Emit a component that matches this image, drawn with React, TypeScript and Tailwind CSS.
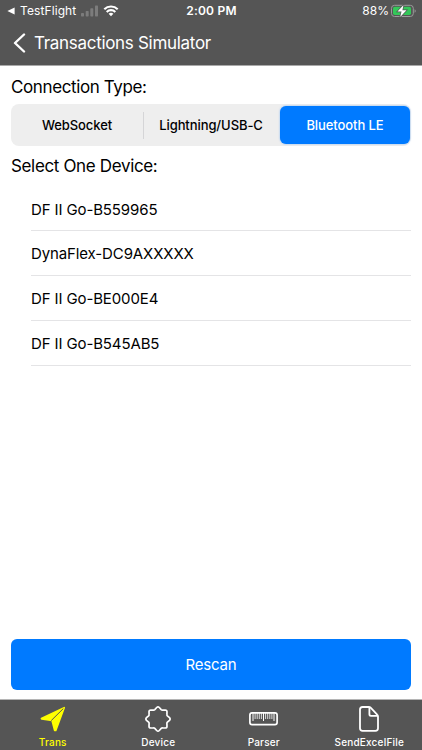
const devices = ["DF II Go-B559965", "DynaFlex-DC9AXXXXX", "DF II Go-BE000E4", "DF II Go-B545AB5"];

function StatusBar() {
    return (
        <div className="grid h-[22px] grid-cols-3 items-center pl-[7px] pr-[6px] text-[12px] leading-[22px]">
            <div className="flex items-center">
                <svg className="mr-[5px]" width="8" height="8" viewBox="0 0 8 8" fill="currentColor">
                    <path d="M0.4 4 7.6 0.6V7.4Z" />
                </svg>
                <span className="whitespace-nowrap tracking-[0.1px]">TestFlight</span>
                <svg className="ml-[5px]" width="17" height="12" viewBox="0 0 17 12" fill="#7c7c7c">
                    <rect x="0" y="8" width="3" height="3.5" rx="0.7" />
                    <rect x="4.7" y="6" width="3" height="5.5" rx="0.7" />
                    <rect x="9.3" y="3.3" width="3" height="8.2" rx="0.7" />
                    <rect x="14" y="0.5" width="3" height="11" rx="0.7" />
                </svg>
                <svg className="ml-[5px]" width="16" height="12" viewBox="0 0 15 12" fill="none" stroke="currentColor" strokeWidth="2.1">
                    <path d="M0.8 4.3a9.5 9.5 0 0 1 13.4 0" />
                    <path d="M3.2 6.9a6.1 6.1 0 0 1 8.6 0" />
                    <path d="M7.5 11.3 5.1 8.8a3.5 3.5 0 0 1 4.8 0Z" fill="currentColor" stroke="none" />
                </svg>
            </div>
            <span className="text-center font-semibold tracking-[0.2px]">2:00 PM</span>
            <div className="flex items-center justify-end">
                <span>88%</span>
                <svg className="ml-[2px]" width="25" height="14" viewBox="0 0 25 14">
                    <rect x="0.5" y="1.3" width="21.8" height="11.2" rx="3" fill="none" stroke="#9b9b9b" />
                    <path d="M23.6 5.2v3.5q1.1-.5 1.1-1.75t-1.1-1.75Z" fill="#9b9b9b" />
                    <rect x="2" y="2.8" width="18" height="8.2" rx="1.8" fill="#34c759" />
                    <path d="M12.5 1 6.5 7.6h4L9.2 13l6.3-6.8h-4.1Z" fill="#fff" stroke="#555" strokeWidth="1.4" paintOrder="stroke" />
                </svg>
            </div>
        </div>
    );
}

function TransIcon() {
    return (
        <svg width="26" height="26" viewBox="0 0 26 26" fill="currentColor" stroke="currentColor" strokeWidth="1.6" strokeLinejoin="round">
            <path d="M1.4 12.4 24.2 1.7 15.8 24.4H14.6L12 14.4 1.6 12.9Z" />
            <path d="M11.2 14.6 23.3 2.6" stroke="#555555" strokeWidth="1" />
        </svg>
    );
}

function DeviceIcon() {
    return (
        <svg width="26" height="26" viewBox="0 0 26 26" fill="none" stroke="currentColor" strokeWidth="1.7" strokeLinejoin="round">
            <path d="M11.7 1.5Q13 .3 14.3 1.5L16.2 3.6Q16.8 4.2 17.6 4.1L20.2 4Q22 4 22 5.8L21.9 8.4Q21.8 9.2 22.4 9.8L24.5 11.7Q25.7 13 24.5 14.3L22.4 16.2Q21.8 16.8 21.9 17.6L22 20.2Q22 22 20.2 22L17.6 21.9Q16.8 21.8 16.2 22.4L14.3 24.5Q13 25.7 11.7 24.5L9.8 22.4Q9.2 21.8 8.4 21.9L5.8 22Q4 22 4 20.2L4.1 17.6Q4.2 16.8 3.6 16.2L1.5 14.3Q.3 13 1.5 11.7L3.6 9.8Q4.2 9.2 4.1 8.4L4 5.8Q4 4 5.8 4L8.4 4.1Q9.2 4.2 9.8 3.6Z" />
        </svg>
    );
}

function ParserIcon() {
    return (
        <svg width="29" height="26" viewBox="0 0 29 26" fill="none" stroke="currentColor">
            <rect x="0.9" y="6.9" width="27.2" height="11.8" rx="2.2" strokeWidth="1.7" />
            <path d="M4 7v8M14.5 7v8M25 7v8" strokeWidth="1" />
            <path d="M6.1 7v6M8.2 7v6M10.3 7v6M12.4 7v6M16.6 7v6M18.7 7v6M20.8 7v6M22.9 7v6" strokeWidth="0.8" />
        </svg>
    );
}

function FileIcon() {
    return (
        <svg width="20" height="26" viewBox="0 0 20 26" fill="none" stroke="currentColor" strokeWidth="1.8" strokeLinejoin="round">
            <path d="M3.5 1h6.4q1 0 1.7.7L18.2 8.6q.8.8.8 1.8v11.9q0 2.5-2.5 2.5h-13Q1 24.8 1 22.3V3.5Q1 1 3.5 1Z" />
            <path d="M10.4 1.2v7.1q0 1.6 1.6 1.6h6.8" />
        </svg>
    );
}

const tabs = [
    { label: "Trans", Icon: TransIcon },
    { label: "Device", Icon: DeviceIcon },
    { label: "Parser", Icon: ParserIcon },
    { label: "SendExcelFile", Icon: FileIcon },
];

export default function App() {
    return (
        <div className="flex h-[750px] w-[422px] flex-col overflow-hidden bg-white font-['Inter',sans-serif] text-black">
            <header className="h-[66px] shrink-0 border-b border-[#a9a9a9] bg-[#555555] text-white">
                <StatusBar />
                <div className="flex h-[42px] items-center pl-[13px]">
                    <svg width="13" height="20" viewBox="0 0 13 20" fill="none" stroke="currentColor" strokeWidth="2.4" strokeLinecap="round" strokeLinejoin="round">
                        <path d="M11 1.5 2 10l9 8.5" />
                    </svg>
                    <h1 className="ml-[8px] text-[17px] leading-6 tracking-[-0.3px]">Transactions Simulator</h1>
                </div>
            </header>

            <main className="flex min-h-0 flex-1 flex-col px-[11px]">
                <h2 className="mt-[9px] text-[17px] leading-6 tracking-[-0.38px]">Connection Type:</h2>
                <div className="mt-[5px] flex h-[42px] items-center rounded-[8px] bg-[#eeeeee] text-[13px] font-medium tracking-[-0.08px]">
                    <button className="h-[27px] w-[133px] border-r border-[#d5d5d7] pt-px">WebSocket</button>
                    <button className="w-[136px] whitespace-nowrap pr-[2px] pt-[2px]">Lightning/USB-C</button>
                    <button className="h-[38px] w-[130px] rounded-[6px] bg-[#007aff] pt-[2px] text-white shadow-[0_0_2px_#007aff80]">Bluetooth LE</button>
                </div>
                <h2 className="mt-[8px] text-[17px] leading-6 tracking-[-0.35px]">Select One Device:</h2>
                <ul className="mt-[8.4px] pl-5">
                    {devices.map((name) => (
                        <li key={name} className="flex h-[44.8px] items-center border-b border-[#e4e4e6] pt-[3px] text-[15px] tracking-[-0.12px]">
                            {name}
                        </li>
                    ))}
                </ul>
                <button className="mb-[9px] mt-auto h-[51px] rounded-[6px] bg-[#007aff] pt-px text-[15px] tracking-[-0.2px] text-white">Rescan</button>
            </main>

            <nav className="grid h-[51px] shrink-0 grid-cols-4 border-t border-[#b5b5b5] bg-[#555555] text-white">
                {tabs.map(({ label, Icon }, i) => (
                    <button key={label} className={`flex flex-col items-center pt-[6px] ${i === 0 ? "text-[#ffff00]" : ""}`}>
                        <Icon />
                        <span className="mt-[3px] text-[10px] font-medium leading-[14px] tracking-[0.2px]">{label}</span>
                    </button>
                ))}
            </nav>
        </div>
    );
}
